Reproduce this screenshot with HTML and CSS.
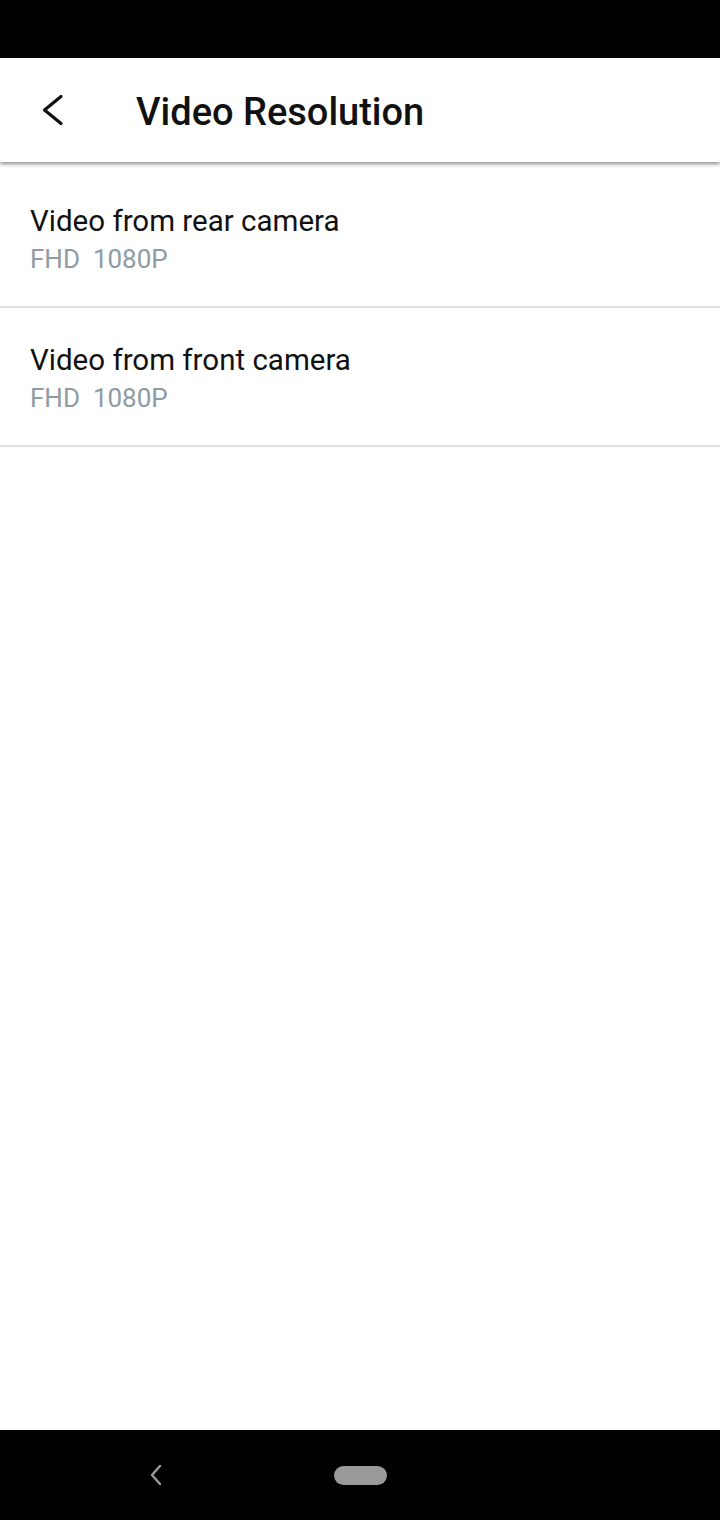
FILE: index.html
```html
<!DOCTYPE html>
<html lang="en">

<head>
    <meta charset="UTF-8">
    <meta name="viewport" content="width=device-width, initial-scale=1.0">
    <title>Video Resolution</title>
    <link rel="stylesheet" href="styles.css">
</head>

<body>
    <div class="status-bar"></div>

    <header class="app-bar">
        <button class="back" aria-label="Back">
            <svg width="24" height="34" viewBox="0 0 24 34">
                <path d="M21 3.5 L4.5 17 L21 30.5" fill="none" stroke="#111" stroke-width="3.2" stroke-linecap="round" stroke-linejoin="round"/>
            </svg>
        </button>
        <h1>Video Resolution</h1>
    </header>

    <main class="list">
        <div class="row">
            <div class="row-title">Video from rear camera</div>
            <div class="row-sub">FHD&nbsp; 1080P</div>
        </div>
        <div class="row">
            <div class="row-title">Video from front camera</div>
            <div class="row-sub">FHD&nbsp; 1080P</div>
        </div>
    </main>

    <nav class="nav-bar">
        <svg class="nav-back" width="14" height="22" viewBox="0 0 14 22">
            <path d="M11 2 L3 11 L11 20" fill="none" stroke="#9a9a9a" stroke-width="2.4" stroke-linecap="round" stroke-linejoin="round"/>
        </svg>
        <div class="nav-pill"></div>
    </nav>
</body>

</html>
```

FILE: styles.css
```css
html,
body {
    margin: 0;
    padding: 0;
}

body {
    width: 720px;
    height: 1520px;
    display: flex;
    flex-direction: column;
    font-family: Roboto, "Noto Sans", sans-serif;
    background: #fff;
    overflow: hidden;
}

.status-bar {
    height: 58px;
    background: #000;
    flex: none;
}

.app-bar {
    height: 104px;
    flex: none;
    display: flex;
    align-items: center;
    background: #fff;
    box-shadow: 0 2px 4px rgba(0, 0, 0, .45);
    position: relative;
    z-index: 1;
}

.back {
    border: 0;
    background: none;
    padding: 0;
    margin-left: 40px;
    width: 24px;
    height: 34px;
    display: flex;
}

.app-bar h1 {
    margin: 3px 0 0 72px;
    font-size: 38px;
    font-weight: 500;
    color: #111;
    letter-spacing: 0;
}

.list {
    flex: 1;
    padding-top: 7px;
}

.row {
    box-sizing: border-box;
    height: 139px;
    border-bottom: 2px solid #e0e0e0;
    padding: 34px 0 0 30px;
}

.row-title {
    font-size: 29.5px;
    color: #111;
    line-height: 36px;
}

.row-sub {
    font-size: 26px;
    color: #8e9ba5;
    line-height: 34px;
    margin-top: 3px;
}

.nav-bar {
    height: 90px;
    flex: none;
    background: #000;
    display: flex;
    align-items: center;
    position: relative;
}

.nav-back {
    margin-left: 149px;
}

.nav-pill {
    width: 53px;
    height: 19px;
    border-radius: 10px;
    background: #9a9a9a;
    margin-left: 171px;
}
```
